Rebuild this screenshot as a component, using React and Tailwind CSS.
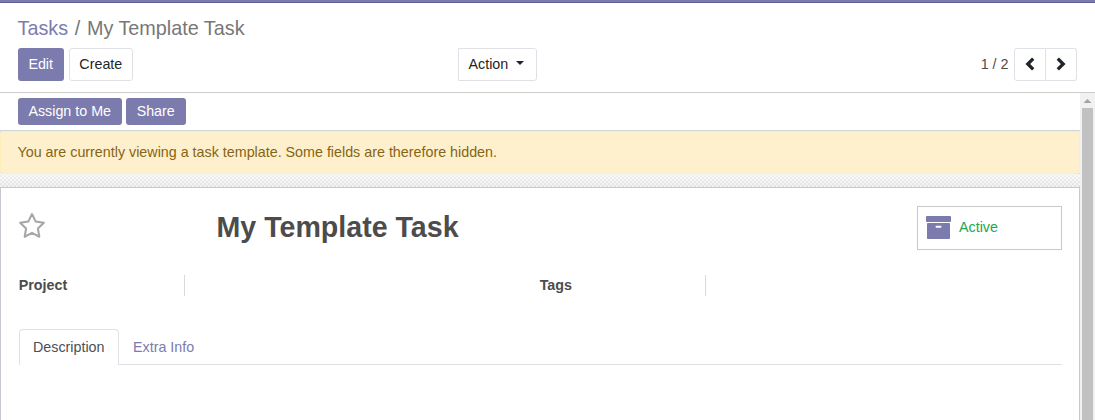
function Star() {
  return (
    <svg viewBox="0 0 26 26" className="h-[28px] w-[28px]" fill="none" stroke="#a6a6a6" strokeWidth="1.9" strokeLinejoin="round">
      <path d="M13 1.9 L16.4 8.9 L24 10 L18.5 15.4 L19.8 23 L13 19.4 L6.2 23 L7.5 15.4 L2 10 L9.6 8.9 Z" />
    </svg>
  );
}

function Archive() {
  return (
    <svg viewBox="0 0 25 23" className="mb-[2px] h-[23px] w-[25px]">
      <rect width="25" height="6" rx="0.8" fill="#7c7bad" />
      <path fillRule="evenodd" fill="#7c7bad" d="M1.8 7H23.2Q24 7 24 7.8V22.2Q24 23 23.2 23H1.8Q1 23 1 22.2V7.8Q1 7 1.8 7ZM10.5 9.8Q9.5 9.8 9.5 10.8T10.5 11.8H14.5Q15.5 11.8 15.5 10.8T14.5 9.8Z" />
    </svg>
  );
}

function Chevron({ right }) {
  return (
    <svg viewBox="0 0 10 14" className="h-[14px] w-[10px]" fill="none" stroke="#212529" strokeWidth="3.3">
      <path d={right ? "M1.8 1.6 L7.2 7 L1.8 12.4" : "M8.2 1.6 L2.8 7 L8.2 12.4"} />
    </svg>
  );
}

function Field({ label }) {
  return (
    <div className="flex h-[21px] w-[521px]">
      <div className="w-[166px] border-r border-[#d9d9d9] font-bold leading-[21px]">{label}</div>
    </div>
  );
}

export default function App() {
  return (
    <div className="flex h-[420px] w-[1095px] flex-col overflow-hidden bg-white font-['Liberation_Sans',Arial,sans-serif] text-[14.3px] leading-[21px] text-[#4c4c4c]">
      <div className="h-[3px] shrink-0 border-b border-[#5f5e97] bg-[#7c7bad]" />
      <header className="h-[90px] shrink-0 border-b border-[#cccccc] px-[18px] pt-[10px]">
        <div className="-ml-[0.5px] flex h-[30px] items-center text-[19.8px] leading-[30px]">
          <a className="text-[#7c7bad]">Tasks</a>
          <span className="px-[6.7px] text-[#6c757d]">/</span>
          <span className="text-[#777777]">My Template Task</span>
        </div>
        <div className="mt-[5px] flex h-[33px]">
          <div className="flex w-[440px] gap-[5px]">
            <button className="w-[46px] rounded-[3px] bg-[#7c7bad] pr-[0.6px] text-white">Edit</button>
            <button className="w-[64px] rounded-[3px] border border-[#dee2e6] pr-[0.4px] text-[#212529]">Create</button>
          </div>
          <button className="flex w-[79px] items-center rounded-r-[3px] border border-[#dee2e6] pl-[9.5px] text-[#212529]">
            Action
            <svg viewBox="0 0 8 4" className="ml-[7.5px] mb-[3px] h-[4px] w-[8px]" fill="#212529"><path d="M0 0H8L4 4Z" /></svg>
          </button>
          <div className="ml-auto flex items-center">
            <span className="mr-[5.5px]">1 / 2</span>
            <button className="flex h-[33px] w-[32px] items-center justify-center rounded-l-[3px] border border-[#dee2e6] pb-[2px]"><Chevron /></button>
            <button className="flex h-[33px] w-[31px] items-center justify-center rounded-r-[3px] border border-l-0 border-[#dee2e6] pb-[2px]"><Chevron right /></button>
          </div>
        </div>
      </header>
      <div className="flex min-h-0 flex-1">
        <main className="flex w-[1080px] flex-col bg-[#eeeeee] bg-[conic-gradient(#e2e2e2_25%,#f3f3f3_0_50%,#e2e2e2_0_75%,#f3f3f3_0)] bg-[length:4px_4px]">
          <div className="flex h-[38px] shrink-0 gap-[4px] border-b border-[#ced4da] bg-white pl-[18px] pt-[5px]">
            <button className="h-[27px] w-[104px] rounded-[3px] bg-[#7c7bad] pr-[0.6px] text-white">Assign to Me</button>
            <button className="h-[27px] w-[60px] rounded-[3px] bg-[#7c7bad] pr-[0.6px] text-white">Share</button>
          </div>
          <div className="h-[43px] shrink-0 rounded-[4px] border border-[#ffeeba] bg-[#fff0cd] pl-[16.5px] pt-[10px] text-[#856414]">
            You are currently viewing a task template. Some fields are therefore hidden.
          </div>
          <div className="h-[13px] shrink-0 bg-linear-to-b from-white/50 to-transparent" />
          <section className="flex-1 border border-b-0 border-[#c8c8d3] bg-white px-[17px] pt-[18px]">
            <div className="flex h-[69px]">
              <div className="w-[199px] pt-[6px]"><Star /></div>
              <h1 className="-ml-[0.5px] text-[28.6px] font-bold leading-[42px]">My Template Task</h1>
              <div className="ml-auto flex h-[44px] w-[145px] items-center border border-[#c9c9cb] pl-[8px]">
                <Archive />
                <span className="mb-[2px] ml-[8px] text-[#21a84f]">Active</span>
              </div>
            </div>
            <div className="flex pl-[0.7px]">
              <Field label="Project" />
              <Field label="Tags" />
            </div>
            <nav className="ml-px mt-[33px] flex h-[36px] border-b border-[#dee2e6]">
              <a className="h-[36px] w-[100px] rounded-t-[4px] border border-b-0 border-[#dee2e6] bg-white pl-[13px] pt-[7px] text-[#495057]">Description</a>
              <a className="pl-[14px] pt-[8px] text-[#7c7bad]">Extra Info</a>
            </nav>
          </section>
        </main>
        <div className="flex w-[15px] flex-col items-center bg-[#f1f1f1]">
          <svg viewBox="0 0 15 15" className="h-[15px] w-[15px] shrink-0" fill="#a3a3a3"><path d="M7.5 6L11.5 10H3.5Z" /></svg>
          <div className="w-[11px] flex-1 bg-[#c1c1c1]" />
        </div>
      </div>
    </div>
  );
}
